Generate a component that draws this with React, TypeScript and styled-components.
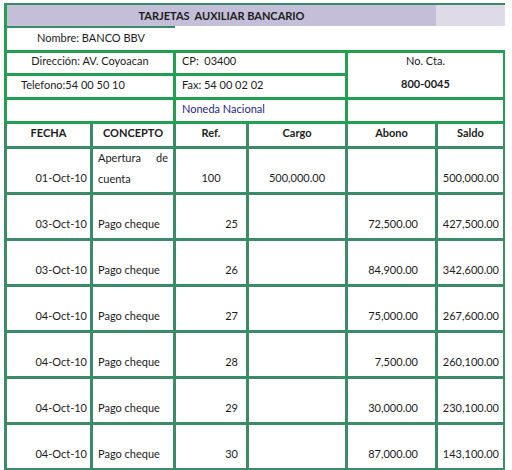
import React from "react";
import styled, { createGlobalStyle } from "styled-components";

const GlobalStyle = createGlobalStyle`
  html, body { margin: 0; padding: 0; background: #ffffff; }
  body { font-family: Lato, "Open Sans", Arial, sans-serif; font-size: 11px; color: #1c1c1c; }
`;

const BRIGHT = "#22a052";
const TEAL = "#3b8b68";

const Sheet = styled.div`
  width: 501px;
  margin: 3px 0 0 4px;
  display: flex;
  flex-direction: column;
`;

const TitleBar = styled.div`
  display: flex;
  height: 21px;
  border-top: 2px solid ${TEAL};
  border-left: 3px solid ${BRIGHT};
`;

const TitleMain = styled.div`
  flex: 0 0 429px;
  background: #c5bed9;
  display: flex;
  align-items: center;
  justify-content: center;
  font-weight: 700;
  white-space: pre;
  line-height: 14px;
`;

const TitleTail = styled.div`
  flex: 1;
  background: #dedae8;
`;

const NameRow = styled.div`
  display: flex;
`;

const NameCell = styled.div`
  width: 168px;
  height: 22px;
  border-left: 3px solid ${BRIGHT};
  border-top: 2px solid ${TEAL};
  display: flex;
  align-items: flex-end;
  justify-content: center;
  line-height: 14px;
  & > span { padding-bottom: 5px; }
`;

const InfoGrid = styled.div`
  display: grid;
  grid-template-columns: 83px 80px 70px 96px 87px 65px;
  grid-template-rows: 20px 21px 21px;
  gap: 3px;
  padding: 3px;
  background: ${BRIGHT};
`;

type Align = "left" | "center" | "right";

const justifyFor = (a: Align) =>
  a === "left" ? "flex-start" : a === "right" ? "flex-end" : "center";

const InfoCell = styled.div<{ $col: string; $row?: string; $align?: Align; $pl?: number; $color?: string }>`
  grid-column: ${(p) => p.$col};
  grid-row: ${(p) => p.$row ?? "auto"};
  background: #ffffff;
  display: flex;
  align-items: flex-end;
  justify-content: ${(p) => justifyFor(p.$align ?? "left")};
  padding: 0 0 5px ${(p) => p.$pl ?? 0}px;
  line-height: 14px;
  color: ${(p) => p.$color ?? "#1c1c1c"};
  white-space: pre;
`;

const AccountCell = styled.div`
  grid-column: 5 / 7;
  grid-row: 1 / 3;
  background: #ffffff;
  display: flex;
  flex-direction: column;
  align-items: center;
  justify-content: flex-start;
  padding-top: 1px;
  gap: 9px;
  line-height: 14px;
`;

const AccountNumber = styled.span`
  font-weight: 700;
`;

const LedgerGrid = styled.div`
  display: grid;
  grid-template-columns: 83px 80px 70px 96px 87px 65px;
  grid-template-rows: 22px repeat(7, 43px);
  gap: 3px;
  padding: 0 3px 3px 3px;
  background: ${TEAL};
`;

const HeadCell = styled.div`
  background: #ffffff;
  display: flex;
  align-items: flex-end;
  justify-content: center;
  padding-bottom: 6px;
  line-height: 14px;
  font-weight: 700;
`;

const DataCell = styled.div<{ $align: Align; $pl?: number; $pr?: number }>`
  background: #ffffff;
  display: flex;
  align-items: flex-end;
  justify-content: ${(p) => justifyFor(p.$align)};
  padding: 0 ${(p) => p.$pr ?? 0}px 7px ${(p) => p.$pl ?? 0}px;
  line-height: 14px;
  white-space: nowrap;
`;

const WrapText = styled.div`
  white-space: normal;
  text-align: justify;
  line-height: 21px;
  width: 100%;
  margin-bottom: -4px;
`;

type Row = {
  date: string;
  concept: string;
  ref: string;
  cargo: string;
  abono: string;
  saldo: string;
  wrap?: boolean;
  refCenter?: boolean;
};

const rows: Row[] = [
  { date: "01-Oct-10", concept: "Apertura de cuenta", ref: "100", cargo: "500,000.00", abono: "", saldo: "500,000.00", wrap: true, refCenter: true },
  { date: "03-Oct-10", concept: "Pago cheque", ref: "25", cargo: "", abono: "72,500.00", saldo: "427,500.00" },
  { date: "03-Oct-10", concept: "Pago cheque", ref: "26", cargo: "", abono: "84,900.00", saldo: "342,600.00" },
  { date: "04-Oct-10", concept: "Pago cheque", ref: "27", cargo: "", abono: "75,000.00", saldo: "267,600.00" },
  { date: "04-Oct-10", concept: "Pago cheque", ref: "28", cargo: "", abono: "7,500.00", saldo: "260,100.00" },
  { date: "04-Oct-10", concept: "Pago cheque", ref: "29", cargo: "", abono: "30,000.00", saldo: "230,100.00" },
  { date: "04-Oct-10", concept: "Pago cheque", ref: "30", cargo: "", abono: "87,000.00", saldo: "143,100.00" },
];

const headers = ["FECHA", "CONCEPTO", "Ref.", "Cargo", "Abono", "Saldo"];

export default function App() {
  return (
    <>
      <GlobalStyle />
      <Sheet>
        <TitleBar>
          <TitleMain>TARJETAS  AUXILIAR BANCARIO</TitleMain>
          <TitleTail />
        </TitleBar>
        <NameRow>
          <NameCell>
            <span>Nombre: BANCO BBV</span>
          </NameCell>
        </NameRow>
        <InfoGrid>
          <InfoCell $col="1 / 3" $row="1" $align="center">Dirección: AV. Coyoacan</InfoCell>
          <InfoCell $col="3 / 5" $row="1" $pl={6}>CP:  03400</InfoCell>
          <AccountCell>
            <span>No. Cta.</span>
            <AccountNumber>800-0045</AccountNumber>
          </AccountCell>
          <InfoCell $col="1 / 3" $row="2" $pl={14}>Telefono:54 00 50 10</InfoCell>
          <InfoCell $col="3 / 5" $row="2" $pl={6}>Fax: 54 00 02 02</InfoCell>
          <InfoCell $col="1 / 3" $row="3" />
          <InfoCell $col="3 / 5" $row="3" $pl={6} $color="#1f1f85">Noneda Nacional</InfoCell>
          <InfoCell $col="5 / 7" $row="3" />
        </InfoGrid>
        <LedgerGrid>
          {headers.map((h) => (
            <HeadCell key={h}>{h}</HeadCell>
          ))}
          {rows.map((r, i) => (
            <React.Fragment key={i}>
              <DataCell $align="right" $pr={3}>{r.date}</DataCell>
              {r.wrap ? (
                <DataCell $align="left" $pl={5} $pr={5}>
                  <WrapText>{r.concept}</WrapText>
                </DataCell>
              ) : (
                <DataCell $align="left" $pl={5}>{r.concept}</DataCell>
              )}
              {r.refCenter ? (
                <DataCell $align="center">{r.ref}</DataCell>
              ) : (
                <DataCell $align="right" $pr={8}>{r.ref}</DataCell>
              )}
              <DataCell $align="center">{r.cargo}</DataCell>
              <DataCell $align="right" $pr={17}>{r.abono}</DataCell>
              <DataCell $align="right" $pr={4}>{r.saldo}</DataCell>
            </React.Fragment>
          ))}
        </LedgerGrid>
      </Sheet>
    </>
  );
}
